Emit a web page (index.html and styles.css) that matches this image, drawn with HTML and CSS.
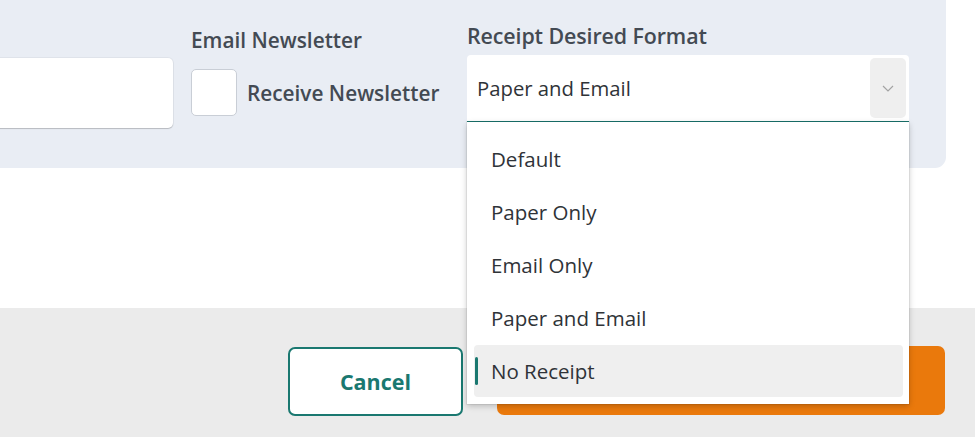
FILE: index.html
```html
<!DOCTYPE html>
<html lang="en">
<head>
<meta charset="utf-8">
<title>Receipt format</title>
<link rel="stylesheet" href="styles.css">
</head>
<body>
<div class="page">
  <section class="panel">
    <div class="col col-field">
      <div class="text-input"></div>
    </div>
    <div class="col col-news">
      <div class="label label-news">Email Newsletter</div>
      <label class="check-row">
        <span class="checkbox"></span>
        <span class="check-text">Receive Newsletter</span>
      </label>
    </div>
    <div class="col col-receipt">
      <div class="label label-receipt">Receipt Desired Format</div>
      <div class="select">
        <span class="select-value">Paper and Email</span>
        <span class="select-btn">
          <svg width="12" height="7" viewBox="0 0 12 7"><path d="M1 1 L6 6 L11 1" fill="none" stroke="#a3a3a3" stroke-width="1.2"/></svg>
        </span>
        <ul class="menu">
          <li class="opt">Default</li>
          <li class="opt">Paper Only</li>
          <li class="opt">Email Only</li>
          <li class="opt">Paper and Email</li>
          <li class="opt opt-active"><span class="indicator"></span>No Receipt</li>
        </ul>
      </div>
    </div>
  </section>
  <div class="spacer"></div>
  <footer class="footer">
    <button class="btn btn-cancel">Cancel</button>
    <button class="btn btn-primary">Save</button>
  </footer>
</div>
</body>
</html>
```
FILE: styles.css
```css
html, body {
  margin: 0;
  padding: 0;
  background: #ffffff;
  font-family: "Open Sans", "Noto Sans", sans-serif;
  overflow: hidden;
}

.page {
  width: 975px;
  height: 437px;
  display: flex;
  flex-direction: column;
}

.panel {
  width: 946px;
  height: 168px;
  background: #e9edf4;
  border-bottom-right-radius: 11px;
  display: flex;
  gap: 18px;
  box-sizing: border-box;
}

.col { display: flex; flex-direction: column; }

.col-field {
  width: 200px;
  margin-left: -27px;
  padding-top: 58px;
}

.text-input {
  height: 70px;
  background: #ffffff;
  border-radius: 5px;
  box-shadow: 0 1px 1px rgba(0,0,0,0.18), 0 0 0 1px rgba(0,0,0,0.04);
}

.label {
  font-size: 20.8px;
  font-weight: 600;
  color: #434a53;
  line-height: 24px;
}

.col-news {
  width: 258px;
  padding-top: 28px;
}

.check-row {
  display: flex;
  align-items: center;
  gap: 10px;
  margin-top: 17px;
}

.checkbox {
  width: 44px;
  height: 45px;
  background: #ffffff;
  border: 1px solid #c9ced6;
  border-radius: 5px;
}

.check-text {
  font-size: 20.8px;
  font-weight: 600;
  color: #434a53;
}

.col-receipt {
  width: 442px;
  padding-top: 24px;
}

.label-receipt { font-size: 21.4px; letter-spacing: -0.1px; }

.select {
  position: relative;
  margin-top: 7px;
  height: 69px;
  background: #ffffff;
  border-radius: 4px 4px 0 0;
  border-bottom: 3px solid #1a7870;
  box-sizing: border-box;
  display: flex;
  align-items: center;
  padding: 3px 3px 3px 10px;
}

.select-value {
  flex: 1;
  font-size: 20.3px;
  color: #2f3338;
}

.select-btn {
  width: 36px;
  align-self: stretch;
  background: #efefef;
  border-radius: 5px;
  display: flex;
  align-items: center;
  justify-content: center;
}

.menu {
  position: absolute;
  left: 0;
  top: 100%;
  width: 442px;
  margin: 1px 0 0;
  padding: 11px 6px 7px 7px;
  box-sizing: border-box;
  list-style: none;
  background: #ffffff;
  box-shadow: 0 2px 6px rgba(0,0,0,0.22), 0 0 0 1px rgba(0,0,0,0.06);
  display: flex;
  flex-direction: column;
  gap: 1px;
  z-index: 5;
}

.opt {
  position: relative;
  height: 52px;
  display: flex;
  align-items: center;
  padding-left: 17px;
  font-size: 20.5px;
  color: #2f3338;
  border-radius: 4px;
}

.opt-active { background: #efefef; }

.indicator {
  position: absolute;
  left: 1px;
  top: 12px;
  width: 3px;
  height: 28px;
  border-radius: 2px;
  background: #1a7870;
}

.spacer { height: 140px; }

.footer {
  flex: 1;
  background: #ebebeb;
  display: flex;
  justify-content: flex-end;
  align-items: flex-start;
  gap: 34px;
  padding: 38px 30px 0 0;
}

.btn {
  height: 69px;
  border-radius: 7px;
  font-family: "Open Sans", "Noto Sans", sans-serif;
  font-size: 21.5px;
  font-weight: 700;
  cursor: pointer;
}

.btn-cancel {
  width: 175px;
  margin-top: 1px;
  background: #ffffff;
  color: #1a7870;
  border: 2px solid #1a7870;
}

.btn-primary {
  width: 448px;
  background: #ea790c;
  color: #ffffff;
  border: none;
}
```
